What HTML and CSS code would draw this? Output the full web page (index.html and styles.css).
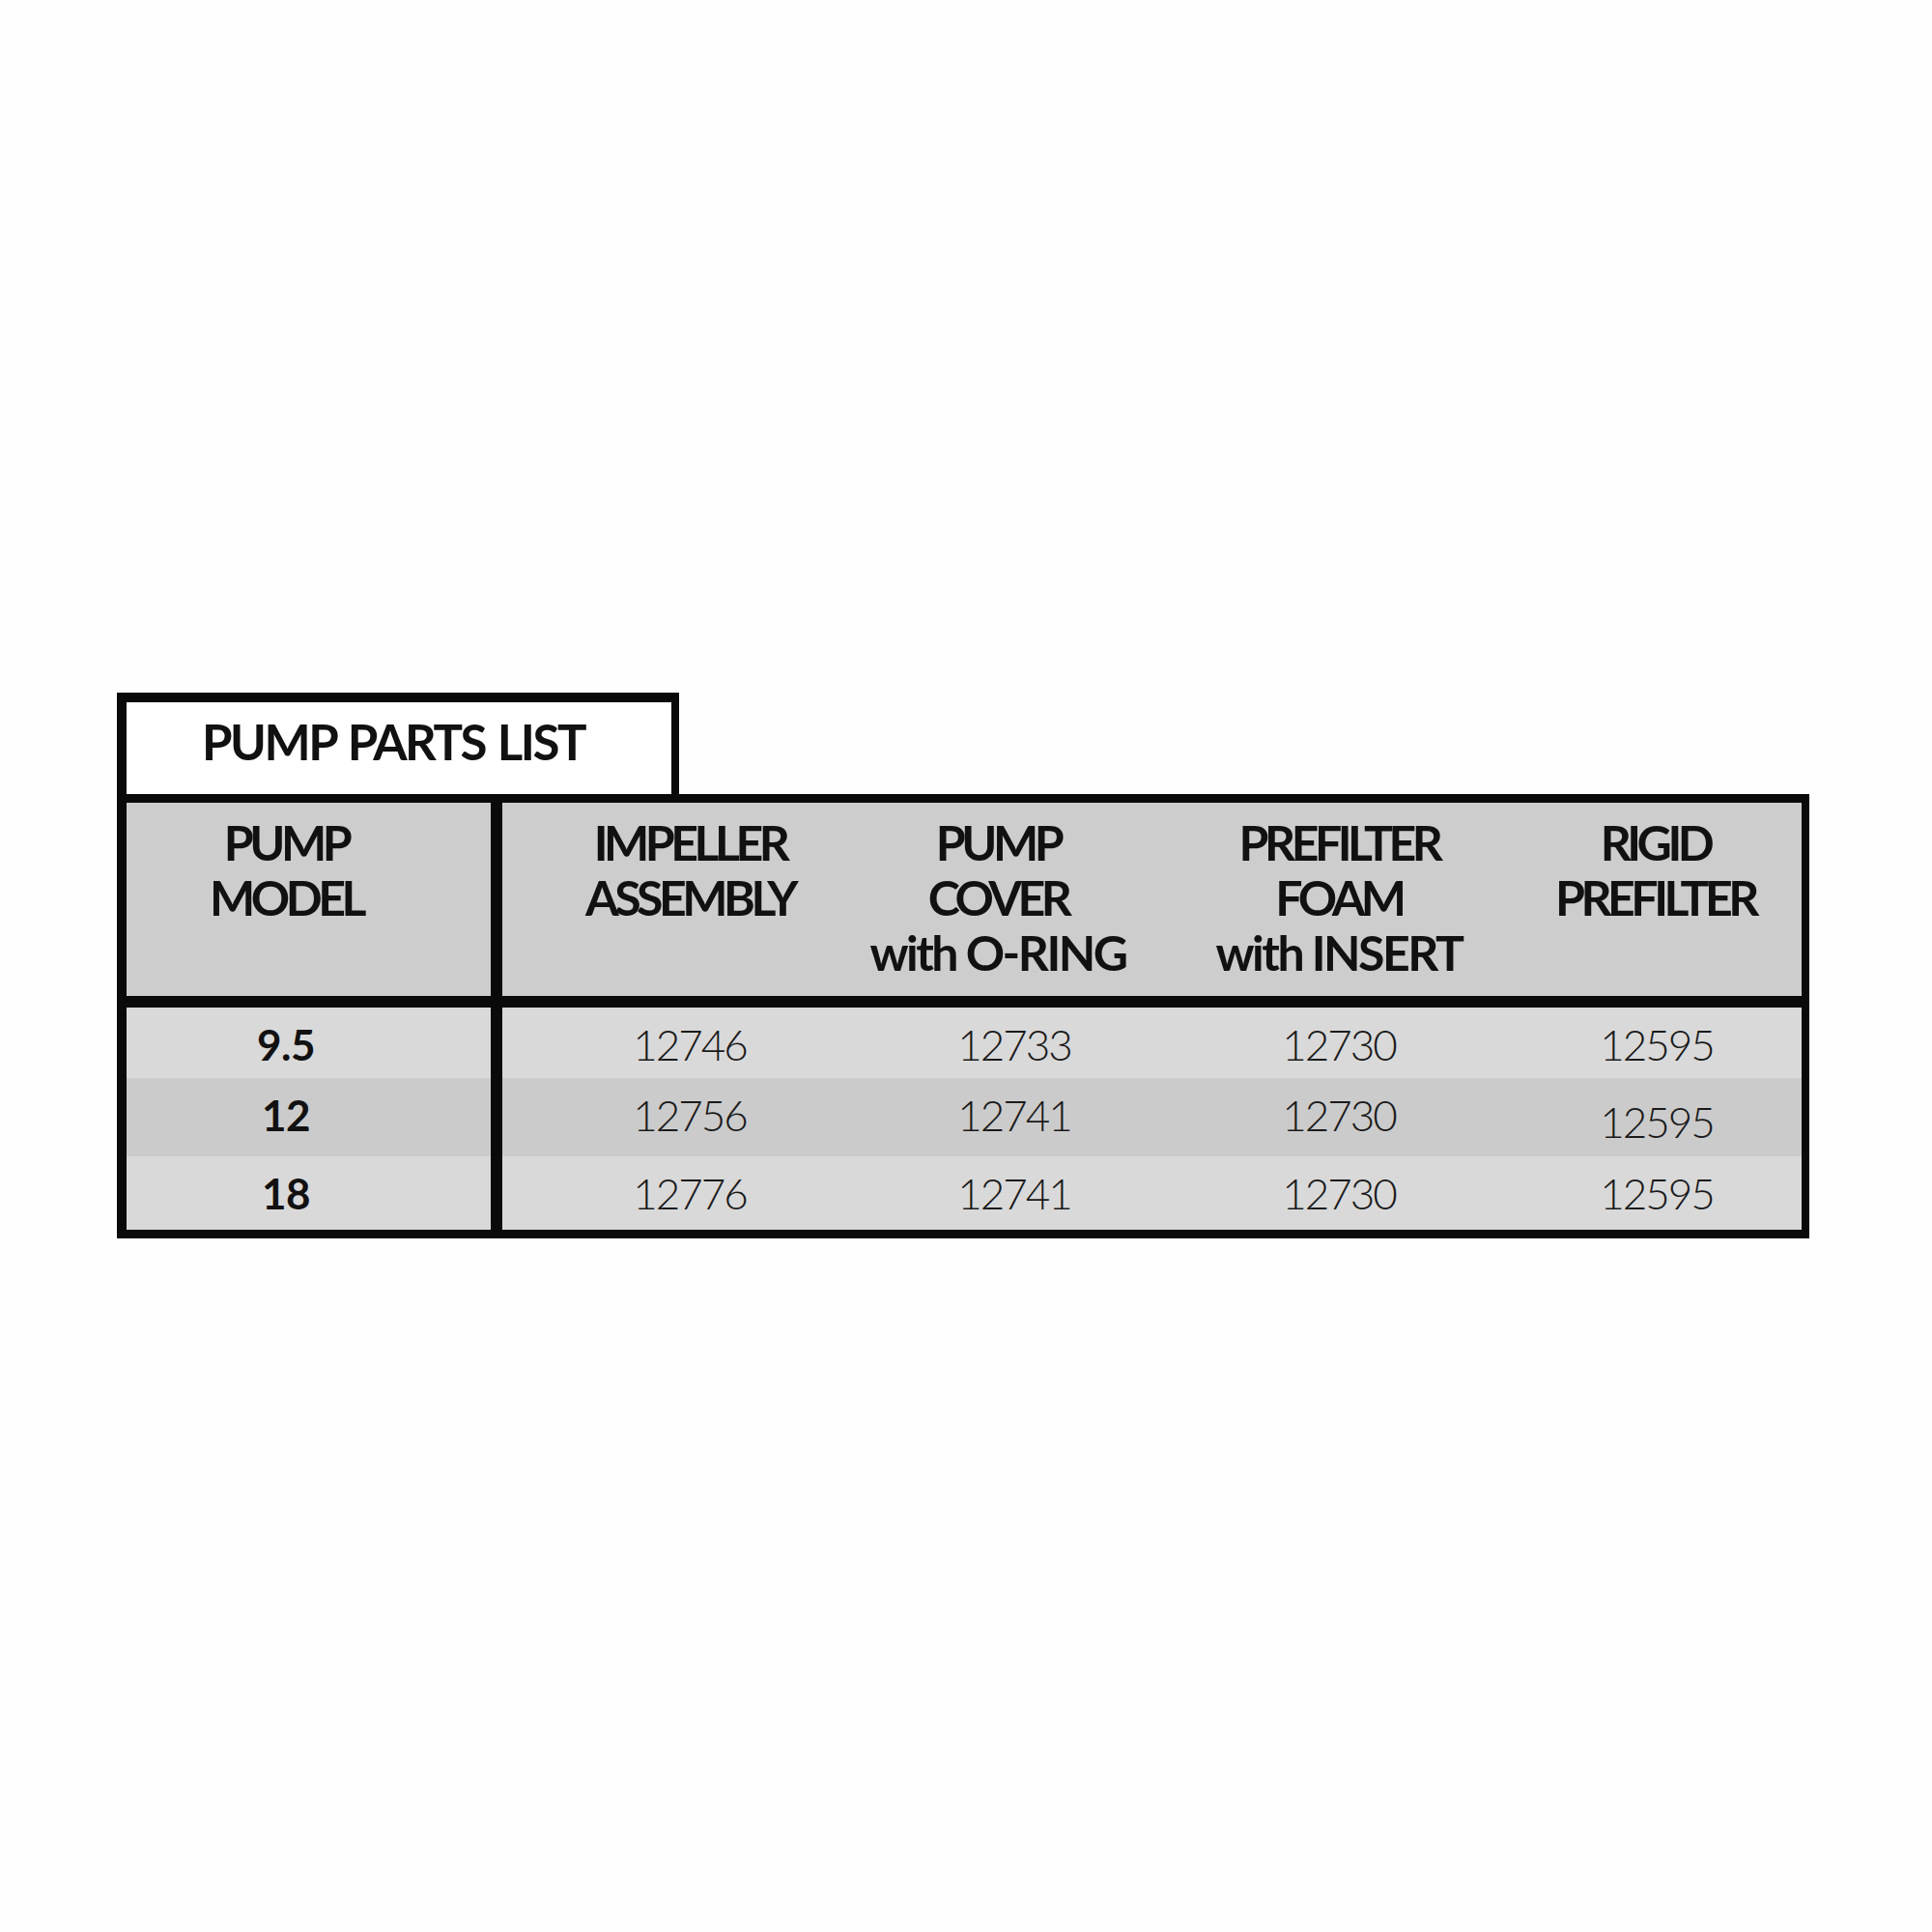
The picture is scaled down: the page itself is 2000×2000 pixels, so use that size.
FILE: index.html
```html
<!DOCTYPE html>
<html>
<head>
<meta charset="utf-8">
<link rel="stylesheet" href="styles.css">
</head>
<body>
<div class="page">
  <div class="title-box"><span class="title">PUMP PARTS LIST</span></div>
  <div class="parts">
    <div class="row head">
      <div class="cell model"><span>PUMP<br>MODEL</span></div>
      <div class="cell c1"><span>IMPELLER<br>ASSEMBLY</span></div>
      <div class="cell c2"><span>PUMP<br>COVER<br><span class="lc">with O-RING</span></span></div>
      <div class="cell c3"><span>PREFILTER<br>FOAM<br><span class="lc">with INSERT</span></span></div>
      <div class="cell c4"><span>RIGID<br>PREFILTER</span></div>
    </div>
    <div class="row data r1">
      <div class="cell model">9.5</div>
      <div class="cell num c1">12746</div>
      <div class="cell num c2">12733</div>
      <div class="cell num c3">12730</div>
      <div class="cell num c4">12595</div>
    </div>
    <div class="row data r2">
      <div class="cell model">12</div>
      <div class="cell num c1">12756</div>
      <div class="cell num c2">12741</div>
      <div class="cell num c3">12730</div>
      <div class="cell num c4 low">12595</div>
    </div>
    <div class="row data r3">
      <div class="cell model">18</div>
      <div class="cell num c1">12776</div>
      <div class="cell num c2">12741</div>
      <div class="cell num c3">12730</div>
      <div class="cell num c4">12595</div>
    </div>
  </div>
</div>
</body>
</html>
```
FILE: styles.css
```css
html, body {
  margin: 0;
  padding: 0;
  background: #fefefe;
}

.page {
  padding: 717px 0 0 121px;
  font-family: "Lato", "Open Sans", sans-serif;
  color: #111;
}

.title-box {
  box-sizing: border-box;
  width: 582px;
  height: 105px;
  border: solid #0a0a0a;
  border-width: 10px 8px 0 10px;
  background: #fff;
  display: flex;
  justify-content: center;
  padding: 12px 12px 0 0;
}

.title {
  font-weight: 700;
  font-size: 51px;
  line-height: 57px;
  letter-spacing: -2.5px;
  word-spacing: 3px;
  white-space: nowrap;
}

.parts {
  box-sizing: border-box;
  width: 1752px;
  border: solid #0a0a0a;
  border-width: 9px 8px 9px 10px;
}

.row {
  display: grid;
  grid-template-columns: 389px 398px 260px 432px 1fr;
}

.cell {
  box-sizing: border-box;
  display: flex;
  flex-direction: column;
  align-items: center;
  text-align: center;
  white-space: nowrap;
}

.model {
  border-right: 12px solid #0a0a0a;
  padding-right: 47px;
}

.c1 {
  padding-right: 10px;
}

.c3 {
  padding-right: 16px;
}

.c4 {
  padding-right: 45px;
}

.head .c2 {
  padding-right: 30px;
}

.head .c4 {
  padding-right: 75px;
}

.head {
  height: 212px;
  box-sizing: border-box;
  background: #cdcdcd;
  border-bottom: 12px solid #0a0a0a;
}

.head .cell {
  padding-top: 13px;
  font-weight: 700;
  font-size: 50px;
  line-height: 57px;
  letter-spacing: -4.5px;
}

.head .lc {
  letter-spacing: -2.5px;
}

.data .cell {
  padding-top: 13px;
  font-size: 44px;
  line-height: 50px;
}

.data .model {
  font-weight: 700;
  letter-spacing: -0.5px;
}

.num {
  font-weight: 300;
  color: #1a1a1a;
  letter-spacing: -2px;
}

.data .c2 {
  padding-left: 4px;
}

.data .low {
  padding-top: 20px;
}

.r1 {
  height: 73px;
  background: #d9d9d9;
}

.r2 {
  height: 81px;
  background: #cbcbcb;
}

.r3 {
  height: 76px;
  background: #d9d9d9;
}
```
